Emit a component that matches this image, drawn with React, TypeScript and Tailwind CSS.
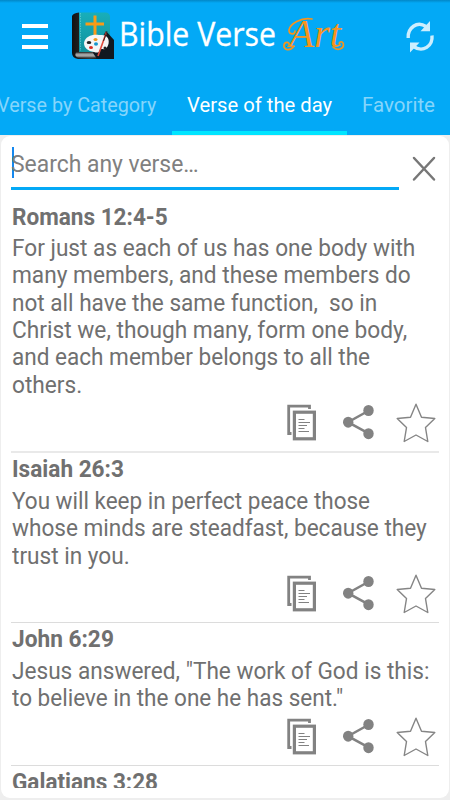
import { useLayoutEffect, useRef, useState } from "react";

// A single line of text condensed horizontally to a given width.
function Fit({ text, width, className = "" }: { text: string; width: number; className?: string }) {
  const ref = useRef<HTMLSpanElement>(null);
  const [scale, setScale] = useState(1);
  useLayoutEffect(() => {
    if (ref.current) setScale(width / ref.current.offsetWidth);
  }, [width, text]);
  return (
    <span className={`block overflow-visible whitespace-pre ${className}`} style={{ width }}>
      <span ref={ref} className="inline-block origin-left" style={{ transform: `scaleX(${scale})` }}>
        {text}
      </span>
    </span>
  );
}

function BookLogo() {
  return (
    <svg width="42" height="48" viewBox="0 0 42 48" className="shrink-0">
      <defs>
        <linearGradient id="spine" x1="0" x2="1">
          <stop offset="0" stopColor="#111" />
          <stop offset=".6" stopColor="#333" />
          <stop offset="1" stopColor="#171717" />
        </linearGradient>
        <linearGradient id="cover" x1="0" y1="0" x2="0" y2="1">
          <stop offset="0" stopColor="#18aeba" />
          <stop offset="1" stopColor="#11929d" />
        </linearGradient>
        <linearGradient id="pages" x1="0" y1="0" x2="0" y2="1">
          <stop offset="0" stopColor="#555" />
          <stop offset=".5" stopColor="#b5b5b5" />
          <stop offset="1" stopColor="#666" />
        </linearGradient>
      </defs>
      <path d="M0 4 Q1 1 7 0.500 V39 H29 V47 H6 Q0 46 0 41Z" fill="url(#spine)" />
      <path d="M7 .5 H34 Q38 1 38 5 V40 H7Z" fill="url(#cover)" />
      <path d="M8.500 1V39" stroke="#6fd1d5" strokeWidth=".7" strokeDasharray="1.500 1" />
      <path d="M4 40.500 H28 V45.500 H6 Q2 44.500 4 40.500Z" fill="url(#pages)" />
      <path d="M34 19 L42 28 V47 H25 L21 41Z" fill="#111820" />
      <path d="M23 3.500V24M13.500 12H32" stroke="#f99b17" strokeWidth="3" fill="none" />
      <path d="M35 25c3 3 2 10-2 12-2 1-3-1-5 1-1 3-3 3-6 2-6-1-10-4-10-9 1-7 9-9 15-8 4 0 6 0 8 2Z" fill="#f5f5f5" />
      <ellipse cx="17" cy="30.500" rx="2.300" ry="1.600" fill="#222" />
      <ellipse cx="23.500" cy="27.500" rx="2" ry="1.500" fill="#ef981e" />
      <ellipse cx="24" cy="32" rx="2" ry="1.700" fill="#1696cb" />
      <ellipse cx="19" cy="35.500" rx="2" ry="1.500" fill="#d92c21" />
      <circle cx="33" cy="36" r="1.500" fill="#222" />
      <path d="M34.500 20 L26 44" stroke="#e04a3c" strokeWidth="1.600" />
      <path d="M35 19.500 L31.500 29" stroke="#3a2220" strokeWidth="1" />
    </svg>
  );
}

function RefreshIcon() {
  return (
    <svg width="30" height="34" viewBox="0 0 30 34" className="shrink-0">
      <g fill="none" stroke="#cdeefe" strokeWidth="3.400">
        <path d="M3.200 18 C2.500 8 12 0.500 21 6.500" />
        <path d="M27 15.500 C28 26 18 33 8.500 26.500" />
      </g>
      <path d="M25 1V11.300H15.500Z M5 32.500V22.500H14.500Z" fill="#cdeefe" />
    </svg>
  );
}

function CopyIcon() {
  return (
    <svg width="30" height="37" viewBox="0 0 30 37">
      <g fill="none" stroke="#828282">
        <path d="M22.500 5V2.200H1.700V29.500H4.500" strokeWidth="2.800" strokeLinejoin="miter" />
        <rect x="7.400" y="8.200" width="20" height="26.600" strokeWidth="3.200" />
        <path d="M11.500 15.500h6M11.500 18.500h11.500M11.500 21.500h8.500M11.500 24.500h6M11.500 27.500h10.500" strokeWidth="1" />
      </g>
    </svg>
  );
}

function ShareIcon() {
  return (
    <svg width="31" height="36" viewBox="0 0 31 36">
      <path d="M26 6.500 L5 18.200 L26 29.700" fill="none" stroke="#828282" strokeWidth="2.500" />
      <g fill="#828282">
        <ellipse cx="25.500" cy="6.500" rx="5.200" ry="5.500" />
        <ellipse cx="5.200" cy="18.200" rx="5.200" ry="5.500" />
        <ellipse cx="25.500" cy="29.700" rx="5.200" ry="5.500" />
      </g>
    </svg>
  );
}

function StarIcon() {
  return (
    <svg width="40" height="40" viewBox="0 0 40 40">
      <path
        d="M20 1.200 L25.500 14.300 L38.800 15.500 L29.500 24.600 L31.800 38.500 L20 32 L8.200 38.500 L10.500 24.600 L1.200 15.500 L14.500 14.300Z"
        fill="none"
        stroke="#858585"
        strokeWidth="1.400"
        strokeLinejoin="round"
      />
    </svg>
  );
}

type Line = [string, number];
const verses: { title: Line; lines: Line[]; titleBox: string; rule: string }[] = [
  {
    title: ["Romans 12:4-5", 156],
    lines: [
      ["For just as each of us has one body with", 403.5],
      ["many members, and these members do", 399],
      ["not all have the same function,  so in", 365],
      ["Christ we, though many, form one body,", 395],
      ["and each member belongs to all the", 358],
      ["others.", 70],
    ],
    titleBox: "h-[36px] pt-[2px]",
    rule: "h-[2px] bg-[#e9e9e9]",
  },
  {
    title: ["Isaiah 26:3", 112],
    lines: [
      ["You will keep in perfect peace those", 358],
      ["whose minds are steadfast, because they", 414.5],
      ["trust in you.", 118],
    ],
    titleBox: "h-[35px]",
    rule: "h-px bg-[#dcdcdc]",
  },
  {
    title: ["John 6:29", 101.5],
    lines: [
      ['Jesus answered, "The work of God is this:', 417],
      ['to believe in the one he has sent."', 331],
    ],
    titleBox: "h-[35px]",
    rule: "h-px bg-[#dcdcdc]",
  },
  { title: ["Galatians 3:28", 146], lines: [], titleBox: "h-[35px]", rule: "" },
];

export default function App() {
  return (
    <div className="flex h-[800px] w-[450px] flex-col overflow-hidden bg-[#eeeeee] font-['Roboto',sans-serif] text-[#707070]">
      <header className="h-[135px] shrink-0 overflow-hidden bg-[#03a9f6] bg-linear-to-b from-[#0287c7] from-0% to-[#03a9f6] to-[3px]">
        <div className="flex h-[75px] items-start">
          <div className="mt-6 ml-[22px] flex w-[26px] shrink-0 flex-col gap-[6.500px]">
            <span className="h-1 bg-white" />
            <span className="h-1 bg-white" />
            <span className="h-1 bg-white" />
          </div>
          <div className="mt-3 ml-6 shrink-0">
            <BookLogo />
          </div>
          <Fit
            text="Bible Verse"
            width={157}
            className="mt-[14px] ml-[5px] shrink-0 font-['Open_Sans',sans-serif] text-[32px] leading-10 text-white [-webkit-text-stroke:0.3px_white]"
          />
          <div className="relative mt-[14px] ml-[13px] shrink-0">
            <Fit
              text="Art"
              width={52}
              className="font-['Liberation_Serif',serif] text-[40px] leading-10 text-[#f7941d] italic"
            />
            <svg width="64" height="40" viewBox="0 0 64 40" className="absolute top-0 -left-2" fill="none" stroke="#f7941d" strokeWidth="1.700" strokeLinecap="round">
              <path d="M13 32C9 38 2 36 3 31C4 27 9 28 8 31" />
              <path d="M31 5C20 3 9 10 8 16C8 21 14 21 14 17" />
              <path d="M52 33C57 38 64 34 62 29C60 26 57 29 59 31" />
            </svg>
          </div>
          <div className="mt-5 mr-[15px] ml-auto">
            <RefreshIcon />
          </div>
        </div>
        <nav className="flex h-[60px] text-[20.500px] leading-[60px] text-[#85d5fb]">
          <div className="w-[172px] shrink-0">
            <Fit text="Verse by Category" width={159} className="-ml-[3px]" />
          </div>
          <div className="w-[175px] shrink-0 border-b-4 border-[#00e5ff] pl-[15px] text-white">
            <Fit text="Verse of the day" width={145} />
          </div>
          <Fit text="Favorite" width={73} className="ml-[15px] shrink-0" />
        </nav>
      </header>

      <main className="mx-px mt-px h-[662px] shrink-0 rounded-[9px] bg-white px-[10px]">
        <div className="flex h-[63px]">
          <div className="mt-[11px] h-[43px] w-[388px] shrink-0 border-b-[3px] border-[#03a9f6]">
            <div className="flex h-[31px]">
              <span className="ml-px h-[31px] w-[2px] shrink-0 bg-[#1588ef]" />
              <Fit text="Search any verse…" width={188} className="-ml-[3px] text-[23px] leading-[35px] text-[#808080]" />
            </div>
          </div>
          <svg width="24" height="26" viewBox="0 0 24 26" className="mt-[20px] ml-[13px]">
            <path d="M2 2 L22 23.500 M22 2 L2 23.500" stroke="#777777" strokeWidth="2.500" strokeLinecap="round" />
          </svg>
        </div>

        <div className="h-[589px] overflow-hidden">
          {verses.map((v) => (
            <article key={v.title[0]}>
              <Fit
                text={v.title[0]}
                width={v.title[1]}
                className={`ml-[0.500px] text-[23px] leading-[34px] font-bold ${v.titleBox}`}
              />
              {v.lines.length > 0 && (
                <>
                  <div className="ml-[0.500px] text-[23px] leading-[27.350px]">
                    {v.lines.map(([t, w]) => (
                      <Fit key={t} text={t} width={w} />
                    ))}
                  </div>
                  <div className="flex h-[52px] items-start justify-end pt-[4px] pr-[3px]">
                    <div className="mt-px mr-[26px]">
                      <CopyIcon />
                    </div>
                    <div className="mt-px mr-[22px]">
                      <ShareIcon />
                    </div>
                    <StarIcon />
                  </div>
                  <div className={`w-[428px] ${v.rule}`} />
                </>
              )}
            </article>
          ))}
        </div>
      </main>
    </div>
  );
}
